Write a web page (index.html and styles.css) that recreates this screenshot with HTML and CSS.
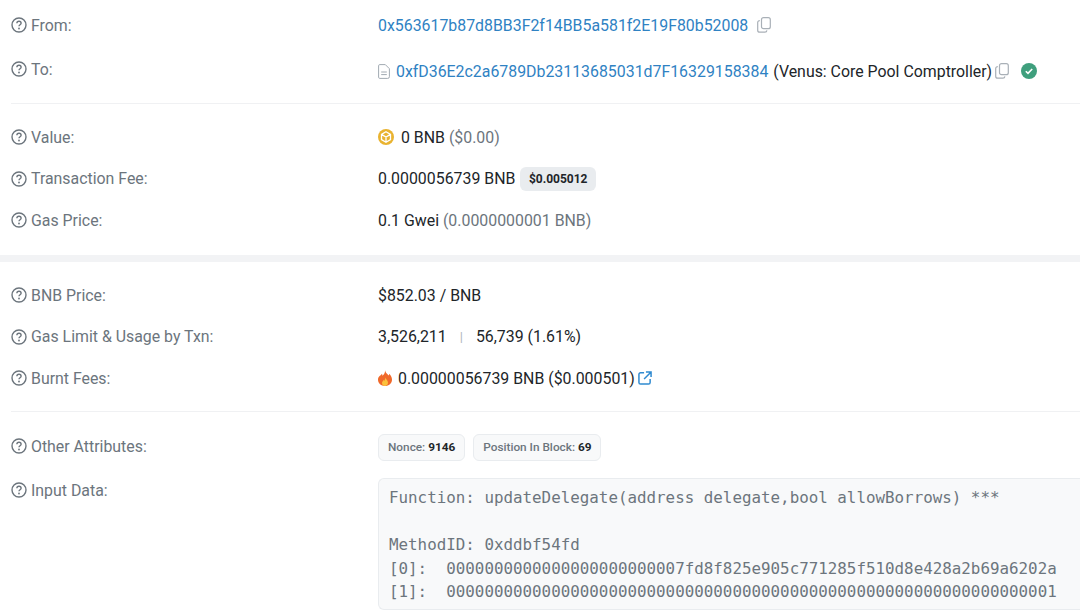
FILE: index.html
```html
<!DOCTYPE html>
<html lang="en">
<head>
    <meta charset="UTF-8">
    <title>Transaction Details</title>
    <link rel="stylesheet" href="styles.css">
</head>
<body>
    <svg class="defs" width="0" height="0">
        <symbol id="help" viewBox="0 0 16 16">
            <circle cx="8" cy="8" r="7" fill="none" stroke="currentColor" stroke-width="1.4"/>
            <path d="M5.900 6.300a2.100 2.100 0 0 1 4.200 0c0 1.400-2.100 1.500-2.100 3" fill="none" stroke="currentColor" stroke-width="1.400"/>
            <circle cx="8" cy="11.500" r=".9" fill="currentColor"/>
        </symbol>
        <symbol id="copy" viewBox="0 0 14 16">
            <rect x="4.500" y=".7" width="8.800" height="11" rx="2" fill="none" stroke="currentColor" stroke-width="1.200"/>
            <path d="M2.800 3.600A2 2 0 0 0 .7 5.600v7.600a2 2 0 0 0 2 2h5.200a2 2 0 0 0 2-1.800" fill="none" stroke="currentColor" stroke-width="1.200"/>
        </symbol>
    </svg>

    <!-- Addresses -->
    <section class="section section-top">
        <div class="row row-tall">
            <div class="label"><svg class="help"><use href="#help"/></svg>From:</div>
            <div class="value">
                <a class="link" href="#">0x563617b87d8BB3F2f14BB5a581f2E19F80b52008</a>
                <svg class="copy copy-from"><use href="#copy"/></svg>
            </div>
        </div>
        <div class="row row-tall">
            <div class="label"><svg class="help"><use href="#help"/></svg>To:</div>
            <div class="value value-to">
                <svg class="file" viewBox="0 0 12 15">
                    <path d="M1.800.6h5.500l4.100 4.100v8a1.700 1.700 0 0 1-1.700 1.700H1.800A1.200 1.200 0 0 1 .6 13.200V1.800A1.200 1.200 0 0 1 1.800.6z" fill="none" stroke="currentColor"/>
                    <path d="M3.200 8h5.600M3.200 10.600h5.600" stroke="currentColor"/>
                </svg>
                <a class="link" href="#">0xfD36E2c2a6789Db23113685031d7F16329158384</a>
                <span class="contract-name">(Venus: Core Pool Comptroller)</span>
                <svg class="copy copy-to"><use href="#copy"/></svg>
                <svg class="check" viewBox="0 0 16 16">
                    <circle cx="8" cy="8" r="8" fill="#3f9f7d"/>
                    <path d="M4.800 8.200l2.200 2.200 4.200-4.400" fill="none" stroke="#fff" stroke-width="1.600"/>
                </svg>
            </div>
        </div>
    </section>

    <!-- Value and fees -->
    <section class="section section-fees">
        <div class="row">
            <div class="label"><svg class="help"><use href="#help"/></svg>Value:</div>
            <div class="value">
                <svg class="bnb" viewBox="0 0 16 16">
                    <circle cx="8" cy="8" r="8" fill="#e9b330"/>
                    <path d="M8 2.800l4.500 2.600v5.200L8 13.200l-4.500-2.600V5.400zM3.500 5.400L8 8l4.500-2.600M8 8v5.200" fill="none" stroke="#fff" stroke-width="1.300"/>
                </svg>
                <span>0 BNB <span class="muted">($0.00)</span></span>
            </div>
        </div>
        <div class="row">
            <div class="label"><svg class="help"><use href="#help"/></svg>Transaction Fee:</div>
            <div class="value">
                <span>0.0000056739 BNB</span>
                <span class="fee-badge">$0.005012</span>
            </div>
        </div>
        <div class="row">
            <div class="label"><svg class="help"><use href="#help"/></svg>Gas Price:</div>
            <div class="value"><span>0.1 Gwei <span class="muted">(0.0000000001 BNB)</span></span></div>
        </div>
    </section>

    <div class="thick-divider"></div>

    <!-- Gas -->
    <section class="section section-gas">
        <div class="row">
            <div class="label"><svg class="help"><use href="#help"/></svg>BNB Price:</div>
            <div class="value">$852.03 / BNB</div>
        </div>
        <div class="row">
            <div class="label"><svg class="help"><use href="#help"/></svg>Gas Limit &amp; Usage by Txn:</div>
            <div class="value">
                <span>3,526,211</span>
                <span class="pipe">|</span>
                <span>56,739 (1.61%)</span>
            </div>
        </div>
        <div class="row">
            <div class="label"><svg class="help"><use href="#help"/></svg>Burnt Fees:</div>
            <div class="value">
                <svg class="flame" viewBox="0 0 14 16">
                    <path d="M7 .3c.6 2.600 2.200 3.500 3.600 5.300.4-.5.600-1.100.6-1.800C12.900 5.400 14 7.500 14 9.700 14 13.300 10.900 16 7 16S0 13.300 0 9.800C0 6.300 3 5.500 4 3.800c.3.800.4 1.300.4 2C6 4.700 7.300 2.800 7 .3z" fill="#f0692a"/>
                    <path d="M7.200 7.500c.3 1.500 2.800 2.800 2.800 5.200 0 1.900-1.400 3.300-3 3.300s-3-1.300-3-3c0-1.700 1.300-2.300 1.900-3.300.2.500.3.800.3 1.200.6-.8 1.100-2.300 1-3.400z" fill="#fbc13c"/>
                </svg>
                <span class="burnt-amount">0.00000056739 BNB ($0.000501)</span>
                <svg class="external" viewBox="0 0 15 15">
                    <path d="M6.500 2H2.700A1.700 1.700 0 0 0 1 3.700v8.600A1.700 1.700 0 0 0 2.700 14h8.600a1.700 1.700 0 0 0 1.700-1.700V8.500M8.500 1H14v5.500M14 1L6.500 8.500" fill="none" stroke="currentColor" stroke-width="1.600"/>
                </svg>
            </div>
        </div>
    </section>

    <!-- Attributes and input -->
    <section class="section section-input">
        <div class="row">
            <div class="label"><svg class="help"><use href="#help"/></svg>Other Attributes:</div>
            <div class="value">
                <span class="pill">Nonce: <b>9146</b></span>
                <span class="pill">Position In Block: <b>69</b></span>
            </div>
        </div>
        <div class="row row-input">
            <div class="label"><svg class="help"><use href="#help"/></svg>Input Data:</div>
            <pre class="input-data">Function: updateDelegate(address delegate,bool allowBorrows) ***

MethodID: 0xddbf54fd
[0]:  0000000000000000000000007fd8f825e905c771285f510d8e428a2b69a6202a
[1]:  0000000000000000000000000000000000000000000000000000000000000001</pre>
        </div>
    </section>
</body>
</html>
```

FILE: styles.css
```css
html, body {
    height: 614px;
    overflow: hidden;
}

body {
    margin: 0;
    background-color: #fff;
    color: #212529;
    font-family: Roboto, "Liberation Sans", sans-serif;
    font-size: 15.88px;
}

.defs {
    position: absolute;
}

.section {
    margin-left: 11px;
}

.section-top {
    padding-top: 3px;
    padding-bottom: 12px;
    border-bottom: 1px solid #f0f1f3;
}

.section-fees {
    padding-top: 12.5px;
    padding-bottom: 14px;
}

.thick-divider {
    height: 6.5px;
    background-color: #f2f3f5;
}

.section-gas {
    padding-top: 13px;
    padding-bottom: 12px;
    border-bottom: 1px solid #f0f1f3;
}

.section-input {
    padding-top: 13.5px;
}

/* Label column + value column */
.row {
    display: grid;
    grid-template-columns: 367px 1fr;
    align-items: center;
    height: 41.5px;
}

.row-tall {
    height: 44px;
}

.row-input {
    height: auto;
    align-items: start;
    margin-top: 10.5px;
}

.label {
    display: flex;
    align-items: center;
    gap: 4px;
    color: #6c757d;
    white-space: nowrap;
}

.row-input .label {
    padding-top: 3px;
}

.help {
    width: 16px;
    height: 16px;
    color: #6c757d;
}

.value {
    display: flex;
    align-items: center;
    white-space: nowrap;
}

.value-to {
    margin-top: 4px;
}

.link {
    color: #2f82c3;
    text-decoration: none;
}

.muted {
    color: #6c757d;
}

.copy {
    width: 14px;
    height: 16px;
    color: #a9b0b7;
}

.copy-from {
    margin-left: 9px;
}

.copy-to {
    margin-left: 3px;
}

.file {
    width: 12px;
    height: 15px;
    margin-right: 6px;
    color: #a2aab2;
}

.contract-name {
    margin-left: 5px;
}

.check {
    width: 16px;
    height: 16px;
    margin-left: 12px;
}

.bnb {
    width: 16px;
    height: 16px;
    margin-right: 7px;
}

.fee-badge {
    margin-left: 5px;
    padding: 0 8.5px;
    height: 24px;
    line-height: 24px;
    border-radius: 6px;
    background-color: #e9ecef;
    font-size: 12px;
    font-weight: 700;
}

.pipe {
    margin: 0 13px;
    color: #adb5bd;
    font-size: 13px;
}

.flame {
    width: 14px;
    height: 16px;
    margin-right: 6px;
}

.external {
    width: 14px;
    height: 14px;
    margin-left: 3px;
    color: #2f8ad0;
}

.pill {
    height: 25px;
    line-height: 25px;
    margin-top: 2px;
    margin-right: 8px;
    padding: 0 9px;
    border: 1px solid #e9ecef;
    border-radius: 6px;
    background-color: #f8f9fa;
    color: #6c757d;
    font-size: 11.8px;
    font-weight: 500;
}

.pill b {
    color: #212529;
    font-weight: 700;
}

.input-data {
    margin: 0;
    padding: 7px 10px 6px;
    height: 117px;
    border: 1px solid #e9ecef;
    border-right: 0;
    border-radius: 6px 0 0 6px;
    background-color: #f8f9fa;
    color: #6c757d;
    font-family: "DejaVu Sans Mono", monospace;
    font-size: 15.85px;
    line-height: 23.7px;
    overflow: hidden;
}
```
